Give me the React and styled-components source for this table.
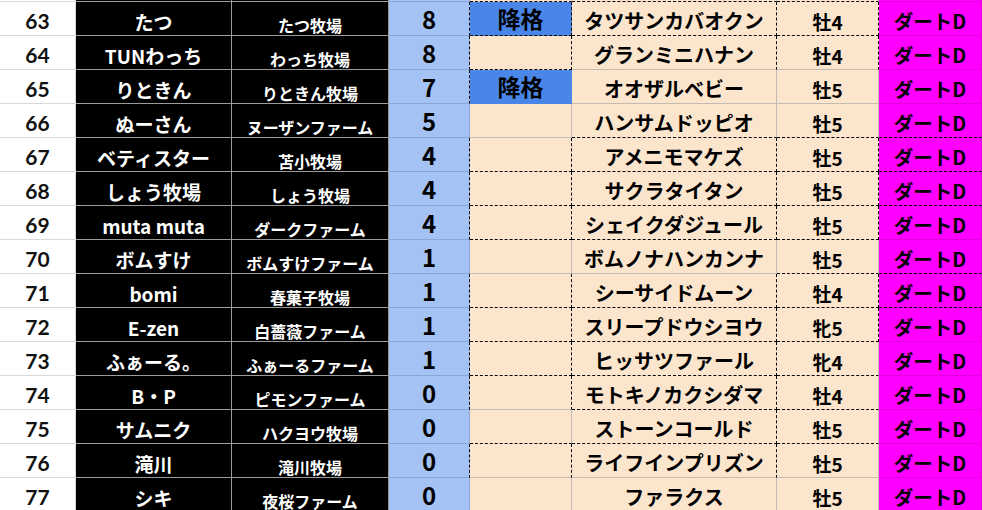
import React from 'react';
import styled, { createGlobalStyle } from 'styled-components';

const GlobalStyle = createGlobalStyle`
  html, body {
    margin: 0;
    padding: 0;
    background: #ffffff;
    overflow: hidden;
  }
`;

const Sheet = styled.div`
  display: grid;
  grid-template-columns: 76px 156px 157px 81px 102px 205px 102px 103px;
  grid-template-rows: 2px repeat(15, 34px);
  width: 982px;
  height: 510px;
  overflow: hidden;
  font-family: "Noto Sans CJK JP", "Noto Sans", sans-serif;
`;

const COLORS = {
  num: { bg: '#ffffff', line: '#d9d9d9', color: '#111111' },
  owner: { bg: '#000000', line: '#9a9a9a', color: '#ffffff' },
  farm: { bg: '#000000', line: '#9a9a9a', color: '#ffffff' },
  pts: { bg: '#a4c2f4', line: '#8aa6d6', color: '#000000' },
  tag: { bg: '#fce5cd', line: '#c4bcb2', color: '#000000' },
  horse: { bg: '#fce5cd', line: '#c4bcb2', color: '#000000' },
  sex: { bg: '#fce5cd', line: '#c4bcb2', color: '#000000' },
  cls: { bg: '#ff00ff', line: '#e000e0', color: '#000000' },
};

const SIZES = {
  num: 21, owner: 19, farm: 16, pts: 24, tag: 23, horse: 20, sex: 19, cls: 19.5,
};

const PAD = { num: 4, owner: 4, farm: 2, pts: 4, tag: 5, horse: 4, sex: 4, cls: 5 };

const Cell = styled.div`
  box-sizing: border-box;
  display: flex;
  align-items: flex-end;
  justify-content: center;
  padding-bottom: ${(p) => p.$pb}px;
  background: ${(p) => p.$bg};
  color: ${(p) => p.$color};
  border-right: 1px ${(p) => (p.$dr ? 'dashed #000' : `solid ${p.$line}`)};
  border-bottom: 1px ${(p) => (p.$db ? 'dashed #000' : `solid ${p.$line}`)};
  font-size: ${(p) => p.$fs}px;
  font-weight: 700;
  line-height: 1;
  white-space: nowrap;
  overflow: hidden;
  font-family: ${(p) => (p.$kind === 'num' ? '"Lato", "Noto Sans CJK JP", sans-serif' : 'inherit')};
`;

const Sliver = styled.div`
  box-sizing: border-box;
  background: ${(p) => p.$bg};
  border-right: 1px solid ${(p) => p.$line};
  border-bottom: 1px ${(p) => (p.$db ? 'dashed #000' : `solid ${p.$line}`)};
`;

const KINDS = ['num', 'owner', 'farm', 'pts', 'tag', 'horse', 'sex', 'cls'];

// dr / db: columns (3=D .. 7=H) that carry a dashed right / bottom edge
const rows = [
  { n: 63, owner: 'たつ', farm: 'たつ牧場', pts: 8, tag: '降格', horse: 'タツサンカバオクン', sex: '牡4', dr: [3, 4, 5, 6], db: [4, 5, 6] },
  { n: 64, owner: 'TUNわっち', farm: 'わっち牧場', pts: 8, tag: '', horse: 'グランミニハナン', sex: '牡4', dr: [3, 4, 5, 6], db: [4] },
  { n: 65, owner: 'りときん', farm: 'りときん牧場', pts: 7, tag: '降格', horse: 'オオザルベビー', sex: '牡5', dr: [3], db: [] },
  { n: 66, owner: 'ぬーさん', farm: 'ヌーザンファーム', pts: 5, tag: '', horse: 'ハンサムドッピオ', sex: '牡5', dr: [], db: [5, 6, 7] },
  { n: 67, owner: 'ベティスター', farm: '苫小牧場', pts: 4, tag: '', horse: 'アメニモマケズ', sex: '牡5', dr: [3, 4, 5, 6], db: [4, 5, 6, 7] },
  { n: 68, owner: 'しょう牧場', farm: 'しょう牧場', pts: 4, tag: '', horse: 'サクラタイタン', sex: '牡5', dr: [3, 4, 5, 6], db: [4, 5, 6, 7] },
  { n: 69, owner: 'muta muta', farm: 'ダークファーム', pts: 4, tag: '', horse: 'シェイクダジュール', sex: '牡5', dr: [3, 4, 5, 6], db: [4, 5, 6] },
  { n: 70, owner: 'ボムすけ', farm: 'ボムすけファーム', pts: 1, tag: '', horse: 'ボムノナハンカンナ', sex: '牡5', dr: [], db: [6, 7] },
  { n: 71, owner: 'bomi', farm: '春菓子牧場', pts: 1, tag: '', horse: 'シーサイドムーン', sex: '牡4', dr: [3, 4, 5, 6], db: [4, 5, 6, 7] },
  { n: 72, owner: 'E-zen', farm: '白薔薇ファーム', pts: 1, tag: '', horse: 'スリープドウシヨウ', sex: '牝5', dr: [3, 4, 5, 6], db: [4, 5, 6] },
  { n: 73, owner: 'ふぁーる。', farm: 'ふぁーるファーム', pts: 1, tag: '', horse: 'ヒッサツファール', sex: '牝4', dr: [3, 4, 5], db: [4, 5, 6] },
  { n: 74, owner: 'B・P', farm: 'ピモンファーム', pts: 0, tag: '', horse: 'モトキノカクシダマ', sex: '牡4', dr: [3, 4, 5], db: [5, 6] },
  { n: 75, owner: 'サムニク', farm: 'ハクヨウ牧場', pts: 0, tag: '', horse: 'ストーンコールド', sex: '牡5', dr: [5], db: [4, 5, 6] },
  { n: 76, owner: '滝川', farm: '滝川牧場', pts: 0, tag: '', horse: 'ライフインプリズン', sex: '牡5', dr: [3, 4, 5], db: [] },
  { n: 77, owner: 'シキ', farm: '夜桜ファーム', pts: 0, tag: '', horse: 'ファラクス', sex: '牡5', dr: [], db: [] },
];

export default function App() {
  return (
    <>
      <GlobalStyle />
      <Sheet>
        {KINDS.map((k, i) => (
          <Sliver key={k} $bg={COLORS[k].bg} $line={COLORS[k].line} $db={i >= 4 && i <= 6} />
        ))}
        {rows.map((r) =>
          KINDS.map((k, i) => {
            const c = COLORS[k];
            const blue = k === 'tag' && r.tag;
            const text = k === 'num' ? r.n : k === 'cls' ? 'ダートD' : r[k];
            return (
              <Cell
                key={`${r.n}-${k}`}
                $kind={k}
                $bg={blue ? '#4a86e8' : c.bg}
                $line={blue ? '#4a86e8' : c.line}
                $color={c.color}
                $fs={SIZES[k]}
                $pb={PAD[k]}
                $dr={r.dr.includes(i)}
                $db={r.db.includes(i)}
              >
                {text}
              </Cell>
            );
          })
        )}
      </Sheet>
    </>
  );
}
